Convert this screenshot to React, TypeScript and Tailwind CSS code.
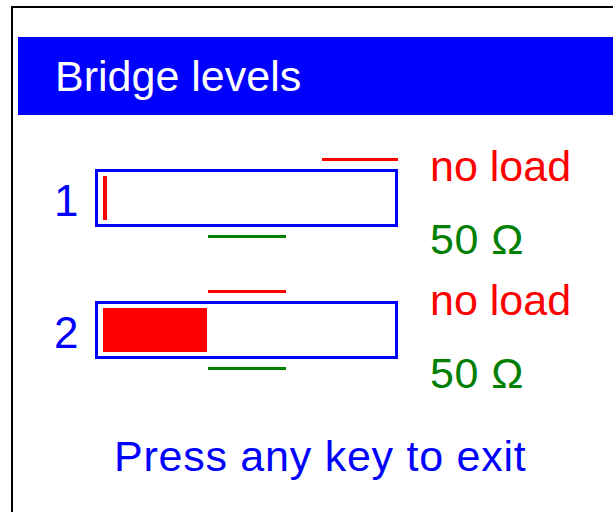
const font = { fontFamily: '"Liberation Sans", Arial, sans-serif' };

type Channel = {
  id: string;
  fill: number;
  loadMark: number;
  loadWidth: number;
  ohmMark: number;
  loadGap: number;
};

const channels: Channel[] = [
  { id: "1", fill: 4, loadMark: 227, loadWidth: 76, ohmMark: 113, loadGap: 13 },
  { id: "2", fill: 104, loadMark: 113, loadWidth: 78, ohmMark: 113, loadGap: 11 },
];

function LevelRow({ ch, className }: { ch: Channel; className?: string }) {
  return (
    <div className={`flex items-start ${className ?? ""}`}>
      <div className="ml-[40px] w-[345px]" style={{ paddingTop: ch.loadGap }}>
        <div className="h-[3px] bg-[#ff0000]" style={{ marginLeft: 42 + ch.loadMark, width: ch.loadWidth }} />
        <div className="mt-[8px] flex items-center">
          <div className="mt-[5px] w-[42px] pl-[1px] text-[44px] leading-[44px] text-[#0000ff]">{ch.id}</div>
          <div className="h-[58px] w-[303px] border-[3px] border-[#0000ff] px-[5px] py-[4px]">
            <div className="h-full bg-[#ff0000]" style={{ width: ch.fill }} />
          </div>
        </div>
        <div className="mt-[8px] h-[3px] w-[78px] bg-[#008000]" style={{ marginLeft: 42 + ch.ohmMark }} />
      </div>
      <div className="ml-[32px] flex flex-col text-[43px] leading-[43px]">
        <span className="text-[#ff0000]">no load</span>
        <span className="mt-[30px] tracking-[0.5px] text-[#008000]">50 Ω</span>
      </div>
    </div>
  );
}

export default function App() {
  return (
    <div className="h-[512px] w-[613px] overflow-hidden bg-white" style={font}>
      <div className="ml-[11px] mt-[6px] h-[506px] border-l-2 border-t-2 border-black">
        <div className="ml-[5px] mt-[29px] flex h-[78px] items-center bg-[#0000ff] pl-[37px]">
          <span className="text-[43px] leading-[43px] text-white">Bridge levels</span>
        </div>
        <LevelRow ch={channels[0]} className="mt-[30px]" />
        <LevelRow ch={channels[1]} className="mt-[18px]" />
        <div className="mt-[40px] pl-[101px] text-[43px] leading-[43px] tracking-[0.75px] text-[#0000ff]">
          Press any key to exit
        </div>
      </div>
    </div>
  );
}
